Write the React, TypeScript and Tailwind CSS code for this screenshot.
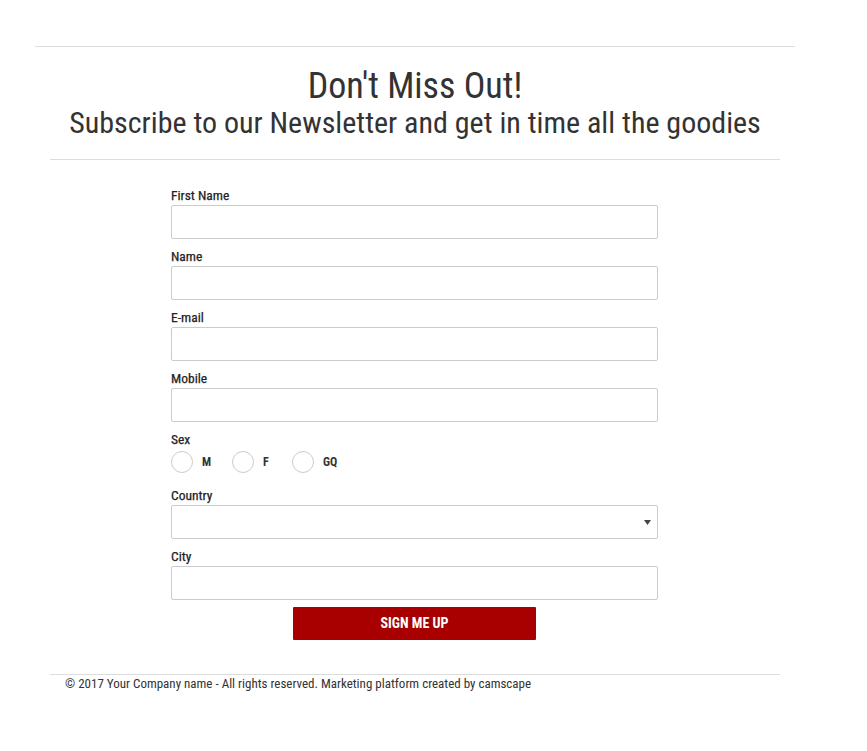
import React from "react";

const font = { fontFamily: '"Roboto Condensed", Roboto, "Liberation Sans", sans-serif' };

function Field({ label, children }: { label: string; children?: React.ReactNode }) {
  return (
    <div className="flex flex-col">
      <label className="text-[13.5px] leading-[15px] font-normal text-[#222] mb-[2px] [-webkit-text-stroke:0.25px_#222]">{label}</label>
      {children ?? <input className="h-[34px] w-full border border-[#ccc] rounded-[2px] bg-white outline-none" />}
    </div>
  );
}

export default function App() {
  return (
    <div className="w-[867px] h-[751px] bg-white text-[#333]" style={font}>
      <div className="pt-[46px] w-[830px]">
        <div className="mx-[35px] w-[760px]">
          <div className="border-t border-[#ddd]" />
          <div className="flex flex-col items-center pt-[19px]">
            <h1 className="text-[36px] leading-[40px] font-normal text-[#333]">Don't Miss Out!</h1>
            <h2 className="text-[30px] leading-[34px] font-normal text-[#333] whitespace-nowrap">
              Subscribe to our Newsletter and get in time all the goodies
            </h2>
          </div>
        </div>
        <div className="ml-[50px] mt-[19px] w-[730px] border-t border-[#ddd]" />
        <form className="ml-[171px] w-[487px] mt-[28px] flex flex-col gap-[10px]">
          <Field label="First Name" />
          <Field label="Name" />
          <Field label="E-mail" />
          <Field label="Mobile" />
          <Field label="Sex">
            <div className="flex items-center h-[22px] mt-[2px] mb-[5px]">
              {["M", "F", "GQ"].map((s, i) => (
                <div key={s} className={"flex items-center " + (i === 0 ? "w-[61px]" : i === 1 ? "w-[60px]" : "")}>
                  <span className="w-[22px] h-[22px] rounded-full border border-[#ccc] bg-white" />
                  <span className="ml-[9px] text-[12px] font-bold text-[#333]">{s}</span>
                </div>
              ))}
            </div>
          </Field>
          <Field label="Country">
            <div className="relative h-[34px] w-full border border-[#ccc] rounded-[2px] bg-white">
              <svg className="absolute right-[6px] top-[13px]" width="7" height="7" viewBox="0 0 7 7">
                <path d="M0 1 L7 1 L3.5 6 Z" fill="#444" />
              </svg>
            </div>
          </Field>
          <Field label="City" />
          <div className="flex justify-center -mt-[3px]">
            <button type="button" className="w-[243px] h-[33px] bg-[#a80000] text-white text-[14px] font-bold rounded-[1px]">
              SIGN ME UP
            </button>
          </div>
        </form>
        <div className="ml-[50px] mt-[34px] w-[730px] border-t border-[#ddd]" />
        <div className="ml-[65px] mt-[0px] text-[13px] leading-[17px] text-[#333]">
          © 2017 Your Company name - All rights reserved. Marketing platform created by camscape
        </div>
      </div>
    </div>
  );
}
